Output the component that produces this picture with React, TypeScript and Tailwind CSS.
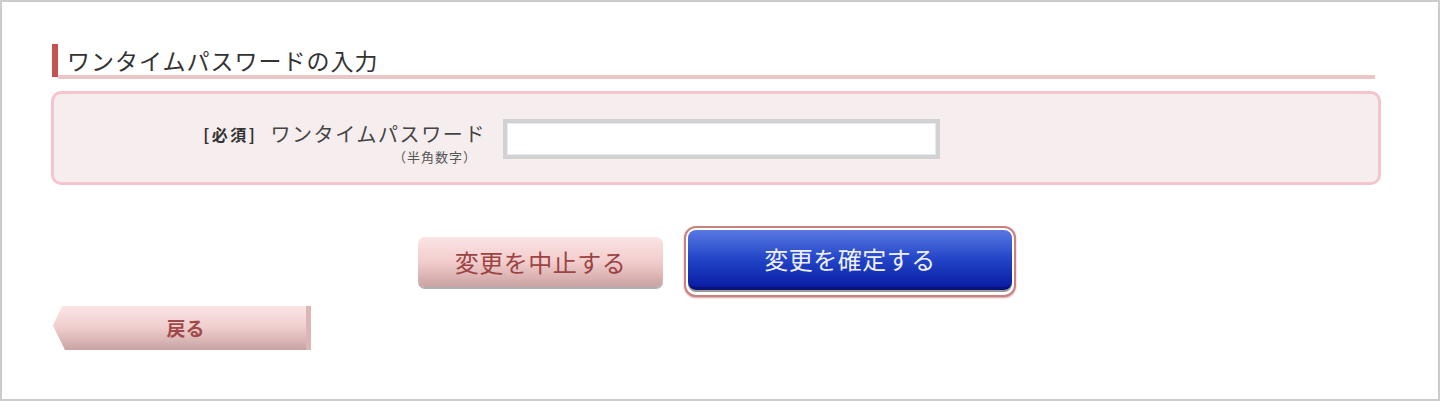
import React from 'react'

const jp = { fontFamily: '"Noto Sans CJK JP", "Noto Sans", sans-serif' }

export default function App() {
  return (
    <div className="w-[1440px] h-[401px] border-2 border-[#cccccc] bg-white pt-[42px] pl-[50px]" style={jp}>
      {/* heading */}
      <div className="flex w-[1323px]">
        <div className="w-[6px] h-[33px] bg-[#c4524f] shrink-0" />
        <div className="flex-1 h-[35px] border-b-4 border-[#ecc6c6] pl-[9px]">
          <h2 className="text-[23px] leading-[32px] tracking-[1px] text-[#333333] font-normal">ワンタイムパスワードの入力</h2>
        </div>
      </div>

      {/* form panel */}
      <div className="mt-[12px] -ml-[1px] w-[1330px] h-[94px] rounded-[10px] border-[3px] border-[#f6c4cc] bg-[#f6eeee] flex items-start">
        <div className="w-[432px] shrink-0 flex flex-col items-end pt-[26px]">
          <div className="flex items-center h-[28px]">
            <span className="text-[16px] tracking-[2.5px] font-bold text-[#333333]">[必須]</span>
            <span className="ml-[13px] text-[20px] tracking-[1.6px] text-[#444444]">ワンタイムパスワード</span>
          </div>
          <span className="mr-[9px] mt-[2px] text-[13px] leading-[14px] tracking-[1px] text-[#555555]">（半角数字）</span>
        </div>
        <div className="ml-[17px] mt-[25px] w-[437px] h-[40px] border-4 border-[#d2d2d2] bg-white">
          <div className="w-full h-full border border-[#e6e9f2]" />
        </div>
      </div>

      {/* action buttons */}
      <div className="mt-[41px] w-[1330px] flex items-center justify-center gap-[21px]">
        <button className="w-[245px] h-[50px] rounded-[7px] bg-gradient-to-b from-[#fbe4e4] via-[#f2cccc] to-[#cba2a2] shadow-[0_2px_0_#aeb0b6] text-[24px] leading-none tracking-[0.5px] text-[#9c4444]">
          変更を中止する
        </button>
        <div className="w-[332px] h-[71px] rounded-[12px] border-2 border-[#c88282] bg-white p-[2px] shadow-[0_1px_2px_#d8a0a0]">
          <button className="w-full h-[60px] rounded-[8px] bg-gradient-to-b from-[#5a78e2] via-[#2345c8] to-[#0a1ca4] border-b-[3px] border-[#08137a] shadow-[0_2px_0_#9a9a9a] text-[24px] leading-none tracking-[0.5px] text-[#eef0ff]">
            変更を確定する
          </button>
        </div>
      </div>

      {/* back */}
      <button
        className="mt-[9px] ml-[1px] w-[258px] h-[44px] bg-gradient-to-b from-[#fbe5e5] via-[#efcdcd] to-[#c9a3a3] border-r-[5px] border-[#dbb6b6] text-[19px] font-bold text-[#a24a4a] flex items-center justify-center pl-[12px]"
        style={{ clipPath: 'polygon(9px 0, 100% 0, 100% 100%, 12px 100%, 0 45%)' }}
      >
        戻る
      </button>
    </div>
  )
}
